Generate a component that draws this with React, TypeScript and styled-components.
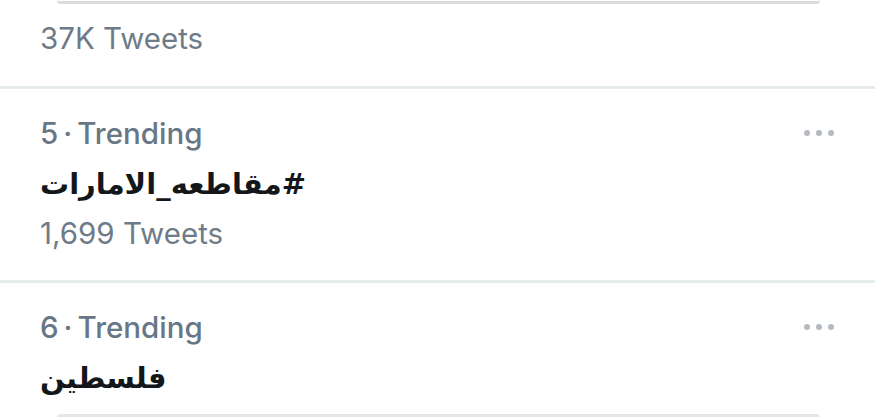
import React from "react";
import styled, { createGlobalStyle } from "styled-components";

const GlobalStyle = createGlobalStyle`
  html, body {
    margin: 0;
    padding: 0;
    background: #ffffff;
  }
  body {
    font-family: Inter, "Noto Sans", "Liberation Sans", sans-serif;
    -webkit-font-smoothing: antialiased;
  }
`;

const Page = styled.div`
  width: 875px;
  height: 417px;
  overflow: hidden;
  display: flex;
  flex-direction: column;
  background: #ffffff;
`;

const CardEdge = styled.div<{ $side: "top" | "bottom" }>`
  height: 4px;
  flex-shrink: 0;
  margin: 0 55px 0 57px;
  box-sizing: border-box;
  ${(p) =>
    p.$side === "top"
      ? `border-bottom: 3px solid #d9dcdd; border-radius: 0 0 14px 14px;`
      : `border-top: 3px solid #e3e7e8; border-radius: 14px 14px 0 0;`}
`;

const Tail = styled.div`
  flex-shrink: 0;
  padding: 9px 42px 23px 40px;
  border-bottom: 3px solid #e6ebeb;
`;

const Trend = styled.div<{ $last?: boolean }>`
  flex-shrink: 0;
  padding: 19px 42px ${(p) => (p.$last ? "12px" : "22px")} 40px;
  border-bottom: ${(p) => (p.$last ? "none" : "3px solid #e6ebeb")};
`;

const MetaRow = styled.div`
  display: flex;
  align-items: center;
  justify-content: space-between;
  height: 50px;
`;

const Meta = styled.span`
  font-size: 29.5px;
  font-weight: 500;
  color: #687785;
`;

const Dot = styled.span`
  margin: 0 5px;
`;

const More = styled.div`
  display: flex;
  gap: 6px;
  margin-right: -1px;
`;

const MoreDot = styled.span`
  width: 6px;
  height: 6px;
  border-radius: 50%;
  background: #b4babf;
`;

const Title = styled.div`
  height: 50px;
  line-height: 52px;
  font-family: "DejaVu Sans", "Noto Sans", sans-serif;
  font-size: 29px;
  font-weight: 700;
  color: #14171a;
`;

const Count = styled.div`
  height: 50px;
  line-height: 50px;
  font-size: 29.5px;
  color: #6e7b88;
`;

type TrendData = { rank: number; name: string; tweets?: string };

const trends: TrendData[] = [
  { rank: 5, name: "#مقاطعه_الامارات", tweets: "1,699 Tweets" },
  { rank: 6, name: "فلسطين" },
];

export default function App() {
  return (
    <Page>
      <GlobalStyle />
      <CardEdge $side="top" />
      <Tail>
        <Count>37K Tweets</Count>
      </Tail>
      {trends.map((t, i) => (
        <Trend key={t.rank} $last={i === trends.length - 1}>
          <MetaRow>
            <Meta>
              {t.rank}
              <Dot>·</Dot>Trending
            </Meta>
            <More>
              <MoreDot />
              <MoreDot />
              <MoreDot />
            </More>
          </MetaRow>
          <Title>
            <span dir="rtl">{t.name}</span>
          </Title>
          {t.tweets && <Count>{t.tweets}</Count>}
        </Trend>
      ))}
      <CardEdge $side="bottom" />
    </Page>
  );
}
